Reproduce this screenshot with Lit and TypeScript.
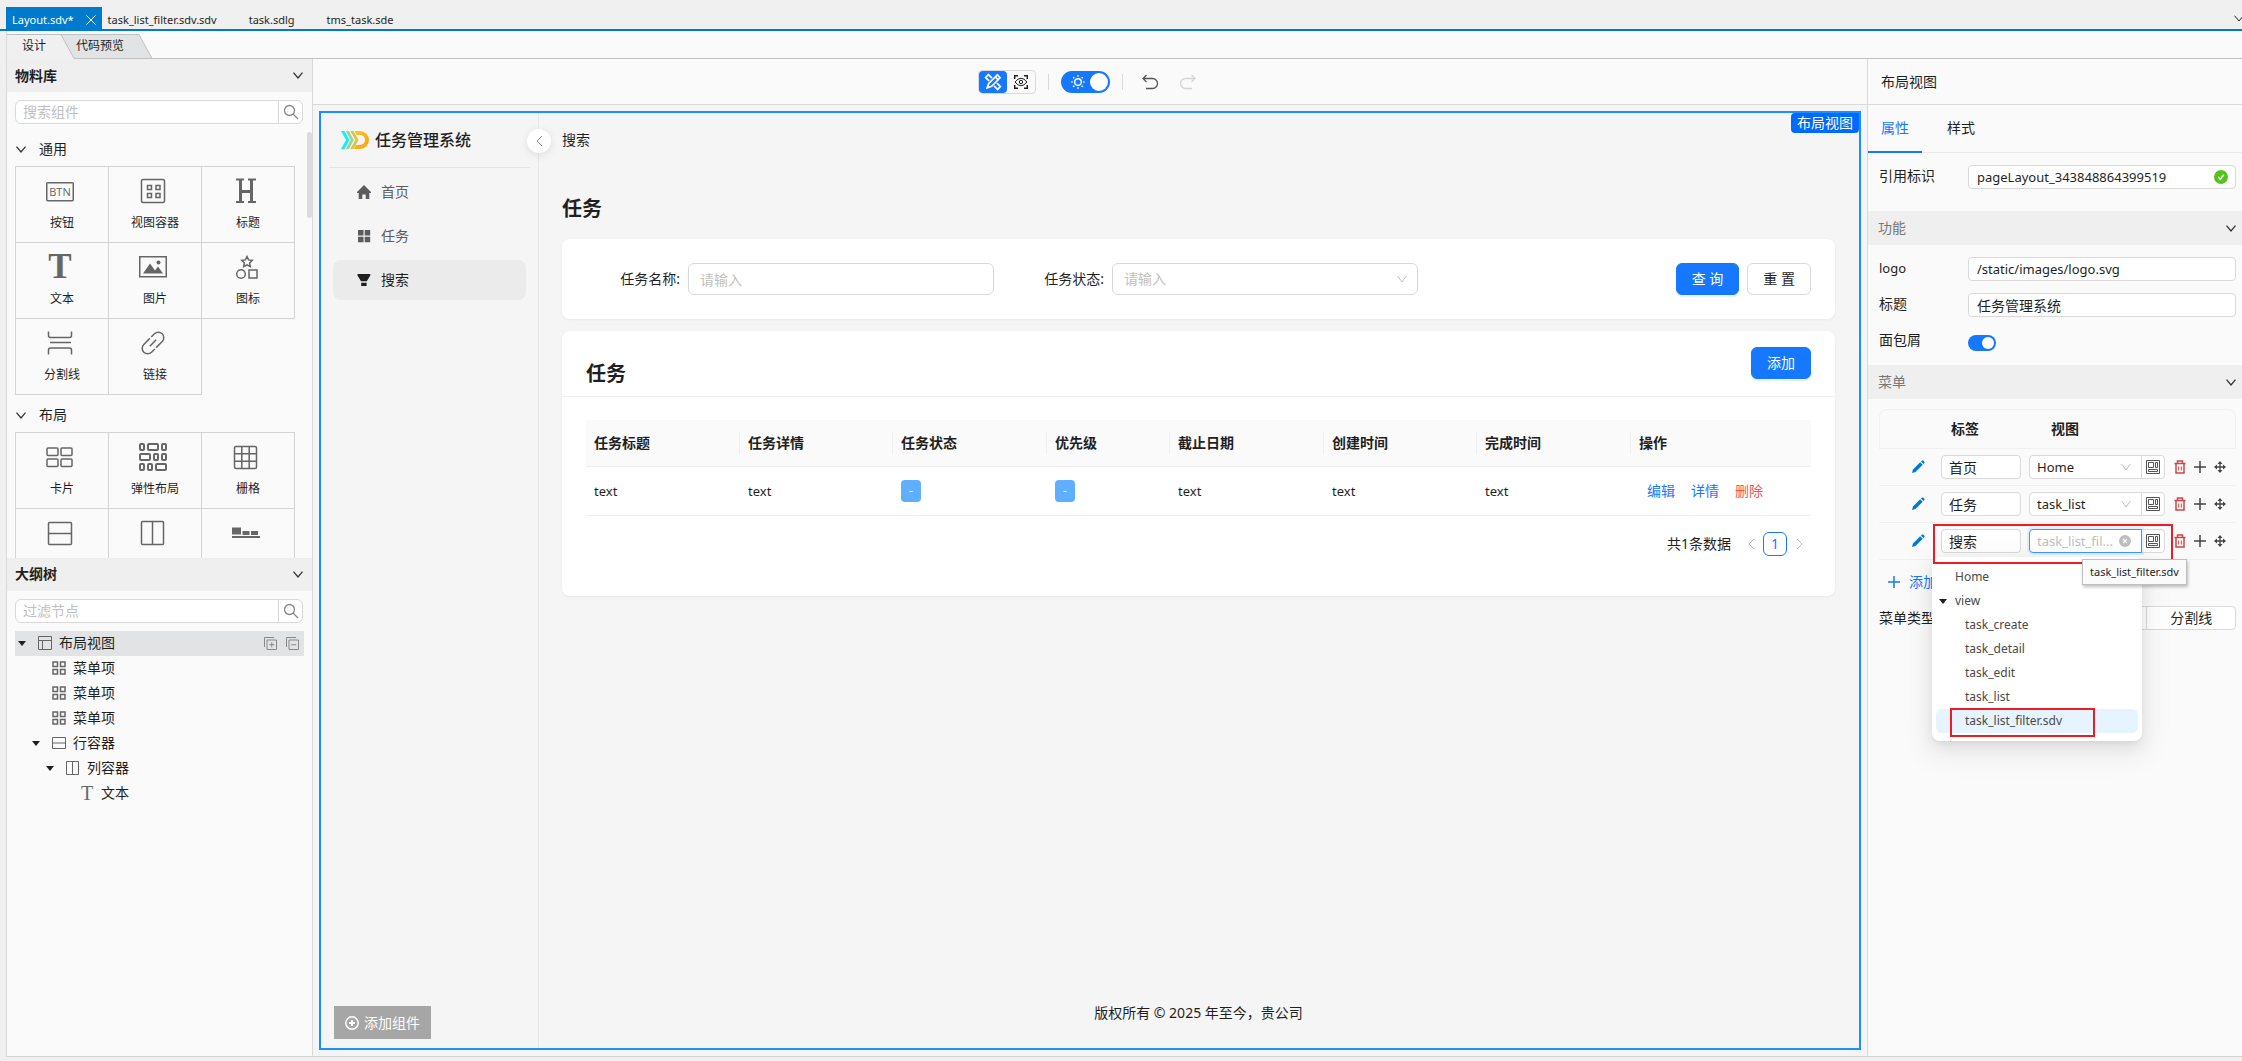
import { LitElement, html, css, svg, nothing } from "lit";
import type { TemplateResult } from "lit";
import { customElement, state } from "lit/decorators.js";
import { classMap } from "lit/directives/class-map.js";

type Glyph = { w: number; h: number; body: TemplateResult };

const glyphs: Record<string, Glyph> = {
  close: { w: 10, h: 10, body: svg`<path d="M.5 .5l9 9M9.500 .5l-9 9" />` },
  chevron: { w: 10, h: 7, body: svg`<path d="M.5 .7L5 6L9.500 .7" />` },
  selectArrow: { w: 10, h: 8, body: svg`<path d="M.6 1L5 7L9.400 1" />` },
  left: { w: 7, h: 12, body: svg`<path d="M6 1L1 6l5 5" />` },
  right: { w: 7, h: 12, body: svg`<path d="M1 1l5 5-5 5" />` },
  search: { w: 16, h: 16, body: svg`<circle cx="6.500" cy="6.500" r="5" stroke-width="1.300" /><path stroke-width="1.300" d="M10 10l5 5" />` },
  caret: { w: 8, h: 5, body: svg`<path class="solid" d="M0 0h8L4 5z" />` },
  button: {
    w: 28, h: 28,
    body: svg`<rect x=".75" y="4.750" width="26.500" height="18" rx="1" /><text class="solid" x="14" y="17.500" font-size="11" text-anchor="middle" font-family="Open Sans, sans-serif">BTN</text>`,
  },
  container: {
    w: 28, h: 28,
    body: svg`<rect x="2.500" y="1.500" width="23" height="23" rx="1.500" /><path d="M8.500 7.500h4v4h-4zM17 7.500h4v4h-4zM8.500 15.500h4v4h-4zM17 15.500h4v4h-4z" />`,
  },
  heading: {
    w: 28, h: 28,
    body: svg`<g class="solid"><rect x="7" y="1" width="3" height="24" /><rect x="18" y="1" width="3" height="24" /><rect x="8" y="12" width="12" height="3" /><rect x="4" y=".5" width="8" height="2" /><rect x="16" y=".5" width="8" height="2" /><rect x="4" y="23" width="8" height="2" /><rect x="16" y="23" width="8" height="2" /></g>`,
  },
  text: {
    w: 28, h: 28,
    body: svg`<text class="solid" x="14" y="24" font-size="35" font-weight="700" text-anchor="middle" font-family="Liberation Serif, serif">T</text>`,
  },
  picture: {
    w: 28, h: 28,
    body: svg`<rect x=".75" y="2.750" width="26.500" height="20" /><path class="solid" d="M4 19.500l7-10 5 7 3-4 5 7z" /><circle class="solid" cx="19.500" cy="8.500" r="2" />`,
  },
  shapes: {
    w: 28, h: 28,
    body: svg`<path d="M15 2.500l1.600 3.400 3.700.5-2.700 2.600.7 3.700-3.300-1.800-3.300 1.800.7-3.700-2.700-2.600 3.700-.5z" /><circle cx="9" cy="20" r="4.300" /><rect x="17" y="16" width="8" height="8" />`,
  },
  divider: {
    w: 28, h: 28,
    body: svg`<path d="M2.500 1.500v4q0 2 2 2h19q2 0 2-2v-4M4 12.500h21M2.500 24.500v-4.500q0-2 2-2h19q2 0 2 2v4.500" />`,
  },
  link: {
    w: 28, h: 28,
    body: svg`<g transform="rotate(-45 14 13)"><path d="M11 18.500H6.500a5.500 5.500 0 0 1 0-11H15M17 7.500h4.500a5.500 5.500 0 0 1 0 11H13M9.500 13h9" /></g>`,
  },
  card: {
    w: 28, h: 28,
    body: svg`<rect x="1" y="4" width="11" height="7.500" rx="1" /><rect x="15" y="4" width="11" height="7.500" rx="1" /><rect x="1" y="15" width="11" height="7.500" rx="1" /><rect x="15" y="15" width="11" height="7.500" rx="1" />`,
  },
  flex: {
    w: 28, h: 28,
    body: svg`<g stroke-width="2"><rect x="1" y="0" width="4" height="6" rx="1" /><rect x="9" y="0" width="10" height="6" rx="1" /><rect x="23" y="0" width="4" height="6" rx="1" /><rect x="1" y="10" width="10" height="6" rx="1" /><rect x="15" y="10" width="4" height="6" rx="1" /><rect x="23" y="10" width="4" height="6" rx="1" /><rect x="1" y="20" width="4" height="6" rx="1" /><rect x="9" y="20" width="4" height="6" rx="1" /><rect x="17" y="20" width="10" height="6" rx="1" /></g>`,
  },
  grid: {
    w: 28, h: 28,
    body: svg`<rect x="2.500" y="2.500" width="22" height="22" rx="1.500" /><path d="M9.800 2.500v22M17.200 2.500v22M2.500 9.800h22M2.500 17.200h22" />`,
  },
  row: { w: 28, h: 28, body: svg`<rect x="2.500" y="2.500" width="23" height="22" rx="1" /><path d="M2.500 13.500h23" />` },
  column: { w: 28, h: 28, body: svg`<rect x="2.500" y="1.500" width="22" height="23" rx="1" /><path d="M13.500 1.500v23" />` },
  anchor: {
    w: 28, h: 28,
    body: svg`<g class="solid"><rect x="0" y="7.500" width="9" height="7" /><rect x="10.500" y="11" width="7" height="4" /><rect x="19" y="11" width="7" height="4" /><rect x="0" y="16" width="28" height="2" /></g>`,
  },
  layout: { w: 14, h: 14, body: svg`<path d="M.5 .5h13v13H.5zM.5 4.500h13M4.500 4.500v9" />` },
  menuItem: {
    w: 14, h: 14,
    body: svg`<path stroke-width="1.500" d="M1 1h4.500v4.500H1zM8.500 1H13v4.500H8.500zM1 8.500h4.500V13H1zM8.500 8.500H13V13H8.500z" />`,
  },
  rowSmall: { w: 14, h: 14, body: svg`<path d="M.5 1.500h13v11H.5zM.5 7h13" />` },
  columnSmall: { w: 14, h: 14, body: svg`<path d="M.5 .5h12v13H.5zM6.500 .5v13" />` },
  textSmall: {
    w: 14, h: 14,
    body: svg`<text class="solid" x="7" y="14" font-size="20" text-anchor="middle" font-family="Liberation Serif, serif">T</text>`,
  },
  expandAll: { w: 13, h: 13, body: svg`<path d="M.5 10V.5H10M3 3h9.500v9.500H3zM7.750 5.300v5M5.300 7.750h5" />` },
  collapseAll: { w: 13, h: 13, body: svg`<path d="M.5 10V.5H10M3 3h9.500v9.500H3zM5.300 7.750h5" />` },
  design: {
    w: 16, h: 16,
    body: svg`<g transform="rotate(-45 8 8)" stroke-width="1.700"><path d="M6 4.500v-5h4v5M6 11.500v5h4v-5" /></g><g transform="rotate(45 8 8)" stroke-width="1.700"><path d="M6 0h4v12l-2 4.300L6 12zM6 2.800h4" /></g>`,
  },
  preview: {
    w: 14, h: 14,
    body: svg`<path stroke-width="1.400" d="M.7 4V.7H4M10 .7h3.300V4M13.300 10v3.300H10M4 13.300H.7V10" /><path d="M1 7q6-7.500 12 0-6 7.500-12 0z" /><circle cx="7" cy="7" r="1.700" />`,
  },
  sun: {
    w: 14, h: 14,
    body: svg`<circle cx="7" cy="7" r="3.300" stroke-width="1.400" /><path stroke-width="1.500" d="M7 .3v1.500M7 12.200v1.500M.3 7h1.500M12.200 7h1.500M2.200 2.200l1.100 1.100M10.700 10.700l1.100 1.100M11.800 2.200l-1.100 1.100M3.300 10.700l-1.100 1.100" />`,
  },
  undo: { w: 16, h: 16, body: svg`<path d="M1 4.500h9.500a5 5 0 0 1 0 10H4M4.500 1L1 4.500L4.500 8" />` },
  redo: { w: 16, h: 16, body: svg`<path d="M15 4.500H5.500a5 5 0 0 0 0 10H12M11.500 1L15 4.500L11.500 8" />` },
  home: { w: 14, h: 14, body: svg`<path class="solid" d="M7 0L14 7v1h-1.700v6H8.700V9.500H5.300V14H1.700V8H0V7z" />` },
  tiles: { w: 14, h: 14, body: svg`<path class="solid" d="M1 1h5.500v5.500H1zM7.700 1h5.500v5.500H7.700zM1 7.700h5.500v5.500H1zM7.700 7.700h5.500v5.500H7.700z" />` },
  filter: { w: 14, h: 14, body: svg`<path class="solid" d="M.5 1h12.800v1.500L9.800 8.300H4L.5 2.500zM4.200 9.700h5.400V13H4.200z" />` },
  plusCircle: { w: 14, h: 14, body: svg`<circle cx="7" cy="7" r="6.200" stroke-width="1.500" /><path stroke-width="2" d="M7 4v6M4 7h6" />` },
  check: { w: 14, h: 14, body: svg`<circle class="solid" cx="7" cy="7" r="7" /><path stroke="#fff" stroke-width="1.400" d="M4.300 7l2 2.300L9.800 4.800" />` },
  clear: { w: 12, h: 12, body: svg`<circle class="solid" cx="6" cy="6" r="6" /><path stroke="#fff" stroke-width="1.300" d="M4 4l4 4M8 4L4 8" />` },
  pencil: { w: 14, h: 14, body: svg`<path class="solid" d="M1 13l1-3.500L9.200 2.300l2.500 2.500L4.500 12zM10 1.600l1-1q.6-.4 1.200 0l1.200 1.200q.4.6 0 1.200l-1 1z" />` },
  views: {
    w: 14, h: 14,
    body: svg`<path d="M.5 .5h13v13H.5z" /><path d="M2.500 2.500h5v5h-5zM9.500 2.500h2v5h-2zM2.500 9.500h9v2h-9z" />`,
  },
  trash: {
    w: 12, h: 14,
    body: svg`<path stroke-width="1.500" d="M.5 3.500h11M3.500 3V1h5v2M2 4v9h8V4" /><path d="M4.700 6.500v4M7.300 6.500v4" />`,
  },
  plus: { w: 12, h: 12, body: svg`<path stroke-width="1.500" d="M6 0v12M0 6h12" />` },
  move: {
    w: 12, h: 12,
    body: svg`<path stroke-width="1.300" d="M6 1v10M1 6h10" /><path class="solid" d="M6 0l2.500 3h-5zM6 12l2.500-3h-5zM0 6l3-2.500v5zM12 6L9 3.500v5z" />`,
  },
};

function icon(name: string, cls = "") {
  const g = glyphs[name];
  return html`<svg
    class="icon ${cls}"
    width=${g.w}
    height=${g.h}
    viewBox="0 0 ${g.w} ${g.h}"
    aria-hidden="true"
  >
    ${g.body}
  </svg>`;
}

const FILES = ["task_list_filter.sdv.sdv", "task.sdlg", "tms_task.sde"];

const COMMON = [
  ["button", "按钮"], ["container", "视图容器"], ["heading", "标题"],
  ["text", "文本"], ["picture", "图片"], ["shapes", "图标"],
  ["divider", "分割线"], ["link", "链接"],
];

const LAYOUTS = [
  ["card", "卡片"], ["flex", "弹性布局"], ["grid", "栅格"],
  ["row", ""], ["column", ""], ["anchor", ""],
];

const TREE = [
  { depth: 0, open: true, icon: "layout", label: "布局视图" },
  { depth: 1, open: false, icon: "menuItem", label: "菜单项" },
  { depth: 1, open: false, icon: "menuItem", label: "菜单项" },
  { depth: 1, open: false, icon: "menuItem", label: "菜单项" },
  { depth: 1, open: true, icon: "rowSmall", label: "行容器" },
  { depth: 2, open: true, icon: "columnSmall", label: "列容器" },
  { depth: 3, open: false, icon: "textSmall", label: "文本" },
];

const NAV = [
  ["home", "首页"], ["tiles", "任务"], ["filter", "搜索"],
];

const COLUMNS = [
  { label: "任务标题", size: 154 },
  { label: "任务详情", size: 153 },
  { label: "任务状态", size: 154, tag: true },
  { label: "优先级", size: 123, tag: true },
  { label: "截止日期", size: 154 },
  { label: "创建时间", size: 153 },
  { label: "完成时间", size: 154 },
];

const OPTIONS = ["task_create", "task_detail", "task_edit", "task_list", "task_list_filter.sdv"];

@customElement("app-root")
export class AppRoot extends LitElement {
  @state() private navIndex = 2;

  static styles = css`
    :host {
      display: block;
      font-family: "Noto Sans", "Noto Sans CJK SC", sans-serif;
      font-size: 14px;
      line-height: 22px;
      color: #1f1f1f;
    }
    *, *::before, *::after { box-sizing: border-box; }
    h1, h2, h3, ul, p { margin: 0; padding: 0; font-weight: 400; font-size: 14px; }
    ul { list-style: none; }
    button, input, select { font: inherit; color: inherit; margin: 0; }
    button { padding: 0; border: 0; background: none; display: inline-flex; align-items: center; justify-content: center; }
    a { color: inherit; text-decoration: none; }
    .icon { display: block; flex: none; fill: none; stroke: currentColor; overflow: visible; }
    .icon .solid { fill: currentColor; stroke: none; }
    ::placeholder { color: #bfbfbf; opacity: 1; }

    .app { height: 100vh; display: flex; flex-direction: column; background: #f0f0f0; overflow: hidden; }

    .files { display: flex; align-items: stretch; height: 31px; padding: 7px 0 0 6px; border-bottom: 2px solid #007acc; font-size: 11px; line-height: 16px; }
    .file { padding: 5px 16px 0; align-items: flex-start; }
    .file.first { padding-left: 6px; }
    .file.active { background: #007acc; color: #fff; padding: 5px 6px 0; gap: 12px; }
    .file.active .icon { margin-top: 3px; }
    .files .more { margin-left: auto; width: 8px; overflow: hidden; justify-content: flex-start; flex: none; }

    .modes { display: grid; flex: none; height: 28px; margin-left: 6px; padding-top: 3px; background: #fafafa; border-left: 1px solid #d9d9d9; }
    .modes > * { grid-area: 1 / 1; }
    .modes-shape { width: 100%; height: 25px; display: block; }
    .modes-bar { display: flex; font-size: 12px; }
    .modes-bar button { height: 24px; padding: 0 15px; }

    .work { flex: 1; min-height: 0; display: flex; margin: 0 0 4px 6px; border-left: 1px solid #d9d9d9; border-bottom: 1px solid #d4d4d4; background: #fafafa; }

    .left { width: 306px; flex: none; display: flex; flex-direction: column; border-right: 1px solid #d9d9d9; }
    .block { flex: 1 1 0; min-height: 0; overflow: hidden; position: relative; }
    .block-head { display: flex; align-items: center; justify-content: space-between; height: 33px; padding: 0 9px 0 8px; background: #efefef; }
    .block-head h2 { font-weight: 700; }
    .search { display: flex; height: 24px; margin: 8px 9px 0 8px; border: 1px solid #d9d9d9; border-radius: 6px; background: #fff; overflow: hidden; }
    .search input { flex: 1; min-width: 0; border: 0; padding: 0 7px; background: none; outline: none; }
    .search button { width: 24px; border-left: 1px solid #d9d9d9; color: #888; }
    .palette { padding-top: 4px; }
    .thumb { position: absolute; right: 0; top: 73px; width: 5px; height: 86px; border-radius: 3px; background: #dcdcdc; }
    .group { display: flex; align-items: center; gap: 13px; height: 24px; margin: 9px 0 5px 9px; }
    .tiles-grid { display: grid; grid-template-columns: repeat(3, 1fr); margin: 0 18px 0 8px; }
    .tile { height: 77px; margin: 0 -1px -1px 0; border: 1px solid #d4d4d4; padding-top: 11px; flex-direction: column; justify-content: flex-start; gap: 7px; font-size: 12px; line-height: 20px; }
    .tile .icon { color: #666; stroke-width: 1.5; margin-right: 4px; }

    .tree { margin: 8px 8px 0; }
    .node { display: flex; align-items: center; height: 25px; }
    .node.on { background: #e1e3e5; }
    .twist { width: 23px; flex: none; padding-left: 3px; }
    .node .type { color: #666; margin-right: 7px; }
    .tree-tools { margin-left: auto; display: flex; gap: 9px; padding-right: 5px; color: #888; }

    .center { flex: 1; min-width: 0; display: flex; flex-direction: column; background: #f5f5f5; }
    .toolbar { height: 46px; flex: none; display: flex; align-items: center; justify-content: center; gap: 12px; padding-right: 6px; background: #fafafa; border-bottom: 1px solid #d9d9d9; }
    .segment { display: flex; height: 24px; border: 1px solid #d9d9d9; border-radius: 4px; }
    .segment button { width: 28px; border-radius: 4px; }
    .segment .on { background: #1677ff; color: #fff; }
    .bar { width: 1px; height: 16px; background: #d9d9d9; }
    .history { display: flex; gap: 22px; padding-left: 7px; color: #555; stroke-width: 1.3; }
    .history button:disabled { color: #d4d4d4; }

    .theme { display: grid; align-items: center; color: #fff; }
    .theme > * { grid-area: 1 / 1; }
    .theme .icon { margin-left: 10px; pointer-events: none; }
    .toggle { appearance: none; display: flex; justify-content: flex-end; width: 28px; height: 16px; padding: 2px; border-radius: 11px; background: #1677ff; }
    .toggle::before { content: ""; height: 100%; aspect-ratio: 1; border-radius: 50%; background: #fff; }
    .toggle.large { width: 49px; height: 22px; }

    .stage { flex: 1; min-height: 0; margin: 6px; border: 2px solid #1890ff; display: flex; position: relative; }
    .badge { position: absolute; top: 0; right: 0; height: 20px; padding: 0 6px; line-height: 20px; border-radius: 4px 0 4px 4px; background: #006aff; color: #fff; }

    .side { width: 218px; flex: none; display: flex; flex-direction: column; border-right: 1px solid #e8e8e8; position: relative; }
    .brand { display: flex; align-items: center; gap: 6px; height: 55px; margin: 0 8px; padding-left: 12px; border-bottom: 1px solid #e4e4e4; }
    .brand h1 { font-size: 16px; font-weight: 500; }
    .fold { position: absolute; top: 16px; right: -13px; width: 24px; height: 24px; border-radius: 50%; background: #fff; color: #888; box-shadow: 0 2px 8px #0000001a; }
    .nav { display: flex; flex-direction: column; gap: 4px; padding: 4px 12px; }
    .nav a { display: flex; align-items: center; gap: 10px; height: 40px; padding-left: 24px; border-radius: 8px; color: #5c5c5c; }
    .nav a.on { background: #ebebeb; color: #1f1f1f; }
    .add-part { align-self: flex-start; gap: 5px; height: 33px; margin: auto 0 9px 13px; padding: 0 11px; background: #a6a6a6; color: #fff; }

    .page { flex: 1; min-width: 0; display: flex; flex-direction: column; padding: 0 24px 24px 23px; }
    .crumb { height: 54px; line-height: 54px; }
    .page-title { margin: 28px 0 16px; font-size: 20px; line-height: 28px; font-weight: 700; }
    .panel { border-radius: 8px; background: #fff; box-shadow: 0 1px 3px #0000000d; }
    .query { display: grid; grid-template-columns: 126fr 306fr 118fr 306fr 393fr; align-items: center; padding: 24px 24px 24px 0; margin-bottom: 12px; }
    .query label { text-align: right; padding-right: 8px; }
    .field { height: 32px; width: 100%; padding: 0 11px; border: 1px solid #d9d9d9; border-radius: 6px; background: #fff; appearance: none; outline: none; }
    .field.empty { color: #bfbfbf; }
    .pick { display: grid; align-items: center; min-width: 0; }
    .pick > * { grid-area: 1 / 1; }
    .pick > .icon { justify-self: end; margin-right: 11px; color: #bfbfbf; pointer-events: none; }
    .actions { display: flex; justify-content: flex-end; gap: 8px; }
    .btn { height: 32px; padding: 0 15px; border: 1px solid #d9d9d9; border-radius: 6px; background: #fff; }
    .btn.primary { background: #1677ff; border-color: #1677ff; color: #fff; box-shadow: 0 2px 0 #0591ff1a; }

    .list-head { display: flex; justify-content: space-between; height: 66px; padding: 16px 24px 0; border-bottom: 1px solid #f0f0f0; }
    .list-head h2 { font-size: 20px; line-height: 28px; font-weight: 700; padding-top: 13px; }
    .list-body { padding: 23px 24px 40px; }
    .data { width: 100%; table-layout: fixed; border-collapse: separate; border-spacing: 0; }
    .data th { height: 47px; padding: 0; background: #fafafa; border-bottom: 1px solid #f0f0f0; text-align: left; font-weight: 700; }
    .data th span { display: block; padding-left: 8px; border-right: 1px solid #f0f0f0; }
    .data th:last-child span { border: 0; }
    .data td { height: 49px; padding: 0 8px; border-bottom: 1px solid #f0f0f0; }
    .latin { font-size: 13px; }
    .tag { display: block; width: fit-content; padding: 0 8px; border-radius: 4px; background: #5eb0ff; color: #fff; font-size: 12px; }
    .links { display: flex; gap: 16px; padding-left: 8px; color: #1677ff; }
    .links .danger { color: #ff4d4f; }
    .pager { display: flex; justify-content: flex-end; align-items: center; margin-top: 16px; color: #1f1f1f; }
    .pager p { margin-right: 8px; }
    .pager button { width: 24px; height: 24px; color: #bfbfbf; }
    .pager .now { border: 1px solid #1677ff; border-radius: 6px; color: #1677ff; }
    .foot { margin-top: auto; text-align: center; }

    .right { width: 375px; flex: none; border-left: 1px solid #d9d9d9; }
    .right-title { height: 46px; line-height: 46px; padding-left: 13px; border-bottom: 1px solid #d9d9d9; }
    .tabs { display: flex; height: 48px; gap: 12px; border-bottom: 1px solid #e8e8e8; }
    .tabs button { height: 48px; padding: 0 13px; border-bottom: 2px solid transparent; }
    .tabs .on { color: #1677ff; border-color: #1677ff; }
    .form { display: grid; grid-template-columns: 89px 1fr; row-gap: 12px; align-items: center; padding: 12px 6px 12px 11px; }
    .form label { line-height: 20px; padding-bottom: 2px; }
    .form.ident { padding-bottom: 22px; }
    .small { height: 24px; width: 100%; padding: 0 8px; border: 1px solid #d9d9d9; border-radius: 4px; background: #fff; appearance: none; outline: none; min-width: 0; }
    .pick > .ok { color: #52c41a; margin-right: 8px; }
    .switch-row { height: 24px; display: flex; align-items: flex-end; padding-bottom: 2px; }
    .section { display: flex; align-items: center; justify-content: space-between; height: 34px; padding: 0 6px 0 10px; background: #efefef; color: #777; }
    .chev { stroke-width: 1.3; color: #333; }

    .menu { padding: 10px 6px 0 11px; }
    .menu-table { width: 100%; table-layout: fixed; border-collapse: separate; border-spacing: 0; }
    .menu-table th { height: 40px; padding: 0; text-align: left; font-weight: 700; border: solid #f0f0f0; border-width: 1px 0; }
    .menu-table th:first-child { border-left-width: 1px; border-top-left-radius: 8px; }
    .menu-table th:last-child { border-right-width: 1px; border-top-right-radius: 8px; }
    .menu-table th.name { padding-left: 10px; }
    .menu-table th.view { padding-left: 22px; }
    .menu-table td { height: 37px; padding: 0; border-bottom: 1px solid #f0f0f0; vertical-align: middle; }
    .menu-table td.name { padding-right: 8px; }
    .menu-table input, .menu-table select { display: block; }
    .menu-table .small { padding: 0 7px; }
    .col-edit { width: 62px; }
    .col-name { width: 88px; }
    .col-view { width: 136px; }
    .edit { display: flex; margin-left: 32px; color: #0078d4; }
    .view-cell { display: flex; position: relative; }
    .view-cell .pick { flex: 1; }
    .view-cell .small { border-radius: 4px 0 0 4px; }
    .view-cell .pick > .icon { margin-right: 11px; }
    .view-cell > button { width: 24px; height: 24px; margin-left: -1px; border: 1px solid #d9d9d9; border-radius: 0 4px 4px 0; background: #fff; color: #555; }
    .view-cell .focus { border-color: #4096ff; z-index: 1; box-shadow: 0 0 0 2px #0591ff1a; text-overflow: ellipsis; }
    .view-cell .pick > .wipe { z-index: 2; }
    .ops { display: flex; align-items: center; gap: 6px; padding-left: 8px; color: #444; }
    .ops button { width: 14px; height: 24px; }
    .ops .trash { color: #d04545; }

    .popup { position: absolute; z-index: 3; top: 28px; left: -97px; width: 210px; padding: 8px 4px; border-radius: 8px; background: #fff; box-shadow: 0 6px 16px #00000014, 0 3px 6px -4px #0000001f, 0 9px 28px 8px #0000000d; font-size: 12px; line-height: 24px; color: #4a4a4a; }
    .popup li { display: flex; align-items: center; height: 24px; border-radius: 6px; padding-left: 19px; }
    .popup li.branch { padding-left: 3px; gap: 8px; }
    .popup li.leaf { padding-left: 29px; }
    .popup li.on { background: #e6f4ff; }
    .popup .icon { color: #1f1f1f; }
    .hint { position: absolute; z-index: 5; top: 30px; left: 53px; height: 26px; padding: 0 7px; border: 1px solid #bfbfbf; background: #fafafa; box-shadow: 1px 2px 3px #00000040; font-size: 11px; line-height: 24px; white-space: nowrap; }
    .mark { position: absolute; z-index: 4; border: 2px solid #ed1c24; pointer-events: none; }
    .mark.top { top: -5px; left: -96px; width: 240px; height: 40px; }
    .mark.low { top: 179px; left: -79px; width: 145px; height: 29px; }

    .append { gap: 9px; height: 24px; margin: 10px 0 12px 9px; color: #1677ff; }
    .kind { display: grid; grid-template-columns: 89px 1fr; align-items: center; }
    .kinds { display: grid; grid-template-columns: 2fr 1fr; height: 24px; border: 1px solid #d9d9d9; border-radius: 4px; background: #fff; }
    .kinds label { display: grid; place-items: center; }
    .kinds label + label { border-left: 1px solid #d9d9d9; }
    .kinds label > * { grid-area: 1 / 1; }
    .kinds input { appearance: none; width: 100%; height: 100%; }
  `;

  private tiles(items: string[][]) {
    return html`<div class="tiles-grid">
      ${items.map(([name, label]) => html`<button class="tile">${icon(name)}${label}</button>`)}
    </div>`;
  }

  private leftPanel() {
    return html`<aside class="left">
      <section class="block">
        <div class="block-head"><h2>物料库</h2>${icon("chevron", "chev")}</div>
        <div class="search">
          <input type="search" placeholder="搜索组件" aria-label="搜索组件" />
          <button aria-label="搜索">${icon("search")}</button>
        </div>
        <div class="palette">
          <div class="group">${icon("chevron", "chev")}<h3>通用</h3></div>
          ${this.tiles(COMMON)}
          <div class="group">${icon("chevron", "chev")}<h3>布局</h3></div>
          ${this.tiles(LAYOUTS)}
        </div>
        <div class="thumb"></div>
      </section>
      <section class="block">
        <div class="block-head"><h2>大纲树</h2>${icon("chevron", "chev")}</div>
        <div class="search">
          <input type="search" placeholder="过滤节点" aria-label="过滤节点" />
          <button aria-label="过滤">${icon("search")}</button>
        </div>
        <ul class="tree">
          ${TREE.map(
            (n, i) => html`<li class="node ${classMap({ on: i === 0 })}" style="padding-left:${n.depth * 14}px">
              <span class="twist">${n.open ? icon("caret") : nothing}</span>
              ${icon(n.icon, "type")}${n.label}
              ${i === 0
                ? html`<span class="tree-tools">
                    <button aria-label="全部展开">${icon("expandAll")}</button>
                    <button aria-label="全部折叠">${icon("collapseAll")}</button>
                  </span>`
                : nothing}
            </li>`,
          )}
        </ul>
      </section>
    </aside>`;
  }

  private toolbar() {
    return html`<div class="toolbar">
      <div class="segment">
        <button class="on" aria-label="设计">${icon("design")}</button>
        <button aria-label="预览">${icon("preview")}</button>
      </div>
      <span class="bar"></span>
      <label class="theme">
        <input class="toggle large" type="checkbox" role="switch" aria-label="亮色" checked />
        ${icon("sun")}
      </label>
      <span class="bar"></span>
      <div class="history">
        <button aria-label="撤销">${icon("undo")}</button>
        <button aria-label="重做" disabled>${icon("redo")}</button>
      </div>
    </div>`;
  }

  private logo() {
    return html`<svg class="logo" width="28" height="18" viewBox="0 0 28 18" aria-hidden="true">
      <defs>
        <linearGradient id="d" x1="0" y1="0" x2="1" y2="1">
          <stop offset="0" stop-color="#f0cc30" />
          <stop offset="1" stop-color="#ff9d0a" />
        </linearGradient>
      </defs>
      <path fill="#16f0f5" d="M0 0h3.500l5 9-5 9H0l5-9z" />
      <path fill="#9bd48c" d="M4.800 0h3l5 9-5 9h-3l5-9z" />
      <path fill="#d9c44c" d="M9.300 0h3.200l5 9-5 9H9.300l5-9z" />
      <path fill="url(#d)" d="M13.500 0H19a9 9 0 0 1 0 18h-6l2-4h4a5 5 0 0 0 0-10h-3.500z" />
    </svg>`;
  }

  private stage() {
    return html`<div class="stage">
      <aside class="side">
        <div class="brand">${this.logo()}<h1>任务管理系统</h1></div>
        <button class="fold" aria-label="收起">${icon("left")}</button>
        <nav class="nav">
          ${NAV.map(
            ([name, label], i) => html`<a
              href="#"
              class=${classMap({ on: i === this.navIndex })}
              @click=${(e: Event) => {
                e.preventDefault();
                this.navIndex = i;
              }}
              >${icon(name)}${label}</a
            >`,
          )}
        </nav>
        <button class="add-part">${icon("plusCircle")}添加组件</button>
      </aside>
      <main class="page">
        <p class="crumb">搜索</p>
        <h2 class="page-title">任务</h2>
        <form class="panel query">
          <label for="q-name">任务名称:</label>
          <input id="q-name" class="field" placeholder="请输入" />
          <label for="q-state">任务状态:</label>
          <div class="pick">
            <select id="q-state" class="field empty"><option>请输入</option></select>
            ${icon("selectArrow")}
          </div>
          <div class="actions">
            <button type="button" class="btn primary">查 询</button>
            <button type="button" class="btn">重 置</button>
          </div>
        </form>
        <section class="panel">
          <div class="list-head">
            <h2>任务</h2>
            <button class="btn primary">添加</button>
          </div>
          <div class="list-body">
            <table class="data">
              <colgroup>
                ${COLUMNS.map((c) => html`<col style="width:${(c.size / 1225) * 100}%" />`)}
                <col />
              </colgroup>
              <thead>
                <tr>
                  ${COLUMNS.map((c) => html`<th><span>${c.label}</span></th>`)}
                  <th><span>操作</span></th>
                </tr>
              </thead>
              <tbody>
                <tr>
                  ${COLUMNS.map((c) =>
                    c.tag ? html`<td><span class="tag">-</span></td>` : html`<td class="latin">text</td>`,
                  )}
                  <td>
                    <div class="links">
                      <a href="#">编辑</a><a href="#">详情</a><a href="#" class="danger">删除</a>
                    </div>
                  </td>
                </tr>
              </tbody>
            </table>
            <div class="pager">
              <p>共1条数据</p>
              <button aria-label="上一页">${icon("left")}</button>
              <button class="now">1</button>
              <button aria-label="下一页">${icon("right")}</button>
            </div>
          </div>
        </section>
        <footer class="foot">版权所有 © 2025 年至今，贵公司</footer>
      </main>
      <span class="badge">布局视图</span>
    </div>`;
  }

  private viewPicker(value: string) {
    return html`<div class="view-cell">
      <div class="pick">
        <select class="small latin" aria-label="视图"><option>${value}</option></select>
        ${icon("selectArrow")}
      </div>
      <button aria-label="选择视图">${icon("views")}</button>
    </div>`;
  }

  private openPicker() {
    return html`<div class="view-cell">
      <div class="pick">
        <input class="small latin focus" role="combobox" aria-expanded="true" aria-label="视图" placeholder="task_list_fil..." />
        ${icon("clear", "wipe")}
      </div>
      <button aria-label="选择视图">${icon("views")}</button>
      <ul class="popup" role="listbox">
        <li>Home</li>
        <li class="branch">${icon("caret")}view</li>
        ${OPTIONS.map((o, i) => html`<li class="leaf ${classMap({ on: i === OPTIONS.length - 1 })}">${o}</li>`)}
      </ul>
      <span class="mark top"></span>
      <span class="mark low"></span>
      <span class="hint" role="tooltip">task_list_filter.sdv</span>
    </div>`;
  }

  private menuRow(label: string, view: TemplateResult) {
    return html`<tr>
      <td><button class="edit" aria-label="编辑">${icon("pencil")}</button></td>
      <td class="name"><input class="small" aria-label="标签" .value=${label} /></td>
      <td>${view}</td>
      <td>
        <div class="ops">
          <button class="trash" aria-label="删除">${icon("trash")}</button>
          <button aria-label="添加">${icon("plus")}</button>
          <button aria-label="移动">${icon("move")}</button>
        </div>
      </td>
    </tr>`;
  }

  private rightPanel() {
    return html`<aside class="right">
      <h2 class="right-title">布局视图</h2>
      <div class="tabs"><button class="on">属性</button><button>样式</button></div>
      <div class="form ident">
        <label for="ident">引用标识</label>
        <div class="pick">
          <input id="ident" class="small latin" .value=${"pageLayout_343848864399519"} />
          ${icon("check", "ok")}
        </div>
      </div>
      <div class="section"><h3>功能</h3>${icon("chevron", "chev")}</div>
      <div class="form">
        <label class="latin" for="logo">logo</label>
        <input id="logo" class="small latin" .value=${"/static/images/logo.svg"} />
        <label for="title">标题</label>
        <input id="title" class="small" .value=${"任务管理系统"} />
        <label for="crumb">面包屑</label>
        <div class="switch-row"><input id="crumb" class="toggle" type="checkbox" role="switch" checked /></div>
      </div>
      <div class="section"><h3>菜单</h3>${icon("chevron", "chev")}</div>
      <div class="menu">
        <table class="menu-table">
          <colgroup>
            <col class="col-edit" /><col class="col-name" /><col class="col-view" /><col />
          </colgroup>
          <thead>
            <tr><th></th><th class="name">标签</th><th class="view">视图</th><th></th></tr>
          </thead>
          <tbody>
            ${this.menuRow("首页", this.viewPicker("Home"))}
            ${this.menuRow("任务", this.viewPicker("task_list"))}
            ${this.menuRow("搜索", this.openPicker())}
          </tbody>
        </table>
        <button class="append">${icon("plus")}添加</button>
        <div class="kind">
          <span>菜单类型</span>
          <div class="kinds">
            <label><input type="radio" name="kind" aria-label="菜单" /></label>
            <label><input type="radio" name="kind" /><span>分割线</span></label>
          </div>
        </div>
      </div>
    </aside>`;
  }

  render() {
    return html`<div class="app">
      <div class="files">
        <button class="file active">Layout.sdv*${icon("close")}</button>
        ${FILES.map((f, i) => html`<button class="file ${classMap({ first: i === 0 })}">${f}</button>`)}
        <button class="more" aria-label="更多">${icon("chevron")}</button>
      </div>
      <div class="modes">
        <svg class="modes-shape" aria-hidden="true">
          <path d="M0 .5H54L67 24.500V25H0z" fill="#f0f0f0" />
          <path d="M54 .5H132L145 24.500H67z" fill="#e1e3e5" />
          <path d="M0 .5H132L145 24.500M54 .5L67 24.500H9999" fill="none" stroke="#bfbfbf" />
        </svg>
        <div class="modes-bar"><button>设计</button><button>代码预览</button></div>
      </div>
      <div class="work">
        ${this.leftPanel()}
        <section class="center">${this.toolbar()}${this.stage()}</section>
        ${this.rightPanel()}
      </div>
    </div>`;
  }
}
